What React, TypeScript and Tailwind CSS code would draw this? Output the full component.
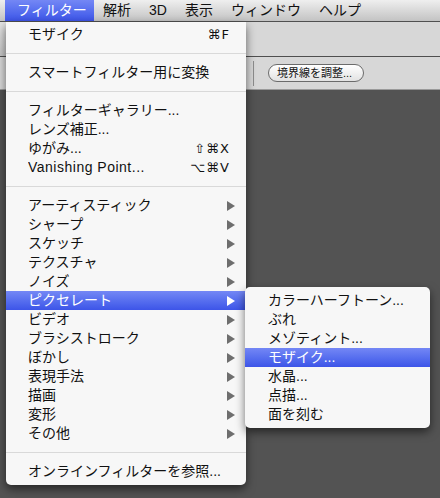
import React from "react";

type Item =
  | { kind: "sep" }
  | { kind: "item"; label: string; shortcut?: string; submenu?: boolean; active?: boolean; latin?: boolean };

const mainItems: Item[] = [
  { kind: "item", label: "モザイク", shortcut: "⌘F" },
  { kind: "sep" },
  { kind: "item", label: "スマートフィルター用に変換" },
  { kind: "sep" },
  { kind: "item", label: "フィルターギャラリー..." },
  { kind: "item", label: "レンズ補正..." },
  { kind: "item", label: "ゆがみ...", shortcut: "⇧⌘X" },
  { kind: "item", label: "Vanishing Point...", shortcut: "⌥⌘V", latin: true },
  { kind: "sep" },
  { kind: "item", label: "アーティスティック", submenu: true },
  { kind: "item", label: "シャープ", submenu: true },
  { kind: "item", label: "スケッチ", submenu: true },
  { kind: "item", label: "テクスチャ", submenu: true },
  { kind: "item", label: "ノイズ", submenu: true },
  { kind: "item", label: "ピクセレート", submenu: true, active: true },
  { kind: "item", label: "ビデオ", submenu: true },
  { kind: "item", label: "ブラシストローク", submenu: true },
  { kind: "item", label: "ぼかし", submenu: true },
  { kind: "item", label: "表現手法", submenu: true },
  { kind: "item", label: "描画", submenu: true },
  { kind: "item", label: "変形", submenu: true },
  { kind: "item", label: "その他", submenu: true },
  { kind: "sep" },
  { kind: "item", label: "オンラインフィルターを参照..." },
];

const subItems = [
  { label: "カラーハーフトーン..." },
  { label: "ぶれ" },
  { label: "メゾティント..." },
  { label: "モザイク...", active: true },
  { label: "水晶..." },
  { label: "点描..." },
  { label: "面を刻む" },
];

const menuBar = ["解析", "3D", "表示", "ウィンドウ", "ヘルプ"];

function Arrow({ active }: { active?: boolean }) {
  return (
    <svg width="8" height="10" viewBox="0 0 8 10" className="shrink-0">
      <polygon points="0,0 8,5 0,10" fill={active ? "#ffffff" : "#6e6e6e"} />
    </svg>
  );
}

function Row({ item }: { item: Extract<Item, { kind: "item" }> }) {
  return (
    <div
      className={`flex h-[19px] items-center pl-[22px] pr-[11px] ${
        item.active ? "bg-gradient-to-b from-[#7487f5] to-[#3d54e8] text-white" : "text-[#111]"
      }`}
    >
      <span className={`flex-1 truncate ${item.latin ? "tracking-[0.5px]" : ""}`}>{item.label}</span>
      {item.shortcut && (
        <span className="mr-[5px] font-['DejaVu_Sans',sans-serif] text-[13px] tracking-[1px]">
          {item.shortcut}
        </span>
      )}
      {item.submenu && <Arrow active={item.active} />}
    </div>
  );
}

export default function App() {
  return (
    <div className="relative flex h-[498px] w-[440px] flex-col overflow-hidden bg-[#535353] font-['Liberation_Sans','Noto_Sans_CJK_JP',sans-serif] text-[14px] leading-[19px]">
      {/* menu bar */}
      <div className="flex h-[22px] shrink-0 items-stretch border-b border-[#505050] bg-gradient-to-b from-[#efefef] to-[#c3c3c3] pl-[5px] text-[#111]">
        <div className="flex w-[89px] items-center bg-gradient-to-b from-[#7487f5] to-[#3d54e8] pl-[12px] text-white">
          フィルター
        </div>
        {menuBar.map((m) => (
          <div key={m} className="flex items-center px-[9px]">
            {m}
          </div>
        ))}
      </div>

      {/* app bar */}
      <div className="flex h-[35px] shrink-0 border-b border-[#4f4f4f] bg-[#d7d7d7]">
        <div className="w-[6px] bg-gradient-to-b from-[#e4e4e4] to-[#c4c4c4]" />
      </div>

      {/* options bar */}
      <div className="flex h-[33px] shrink-0 items-center border-b border-[#9a9a9a] bg-[#d7d7d7] pl-[253px]">
        <div className="h-[25px] w-px bg-[#8c8c8c]" />
        <div className="ml-[14px] flex h-[18px] w-[96px] items-center rounded-full border border-[#6b6b6b] bg-gradient-to-b from-white to-[#e2e2e2] pl-[8px] text-[11px] leading-none text-[#111]">
          境界線を調整...
        </div>
      </div>

      {/* canvas */}
      <div className="flex-1 bg-[#535353]" />

      {/* filter menu */}
      <div className="absolute left-[6px] top-[22px] w-[240px] rounded-b-[5px] bg-[#f7f7f7] pb-[4px] pt-[3px] shadow-[0_4px_10px_rgba(0,0,0,0.55)]">
        {mainItems.map((it, i) =>
          it.kind === "sep" ? (
            <div key={i} className="flex h-[19px] items-center">
              <div className="h-px w-full bg-[#d9d9d9]" />
            </div>
          ) : (
            <Row key={i} item={it} />
          )
        )}
      </div>

      {/* pixelate submenu */}
      <div className="absolute left-[245px] top-[287px] w-[185px] rounded-[5px] bg-[#f7f7f7] pb-[4px] pt-[4px] shadow-[0_4px_10px_rgba(0,0,0,0.55)]">
        {subItems.map((s) => (
          <div
            key={s.label}
            className={`flex h-[19px] items-center pl-[23px] ${
              s.active ? "bg-gradient-to-b from-[#7487f5] to-[#3d54e8] text-white" : "text-[#111]"
            }`}
          >
            {s.label}
          </div>
        ))}
      </div>
    </div>
  );
}
